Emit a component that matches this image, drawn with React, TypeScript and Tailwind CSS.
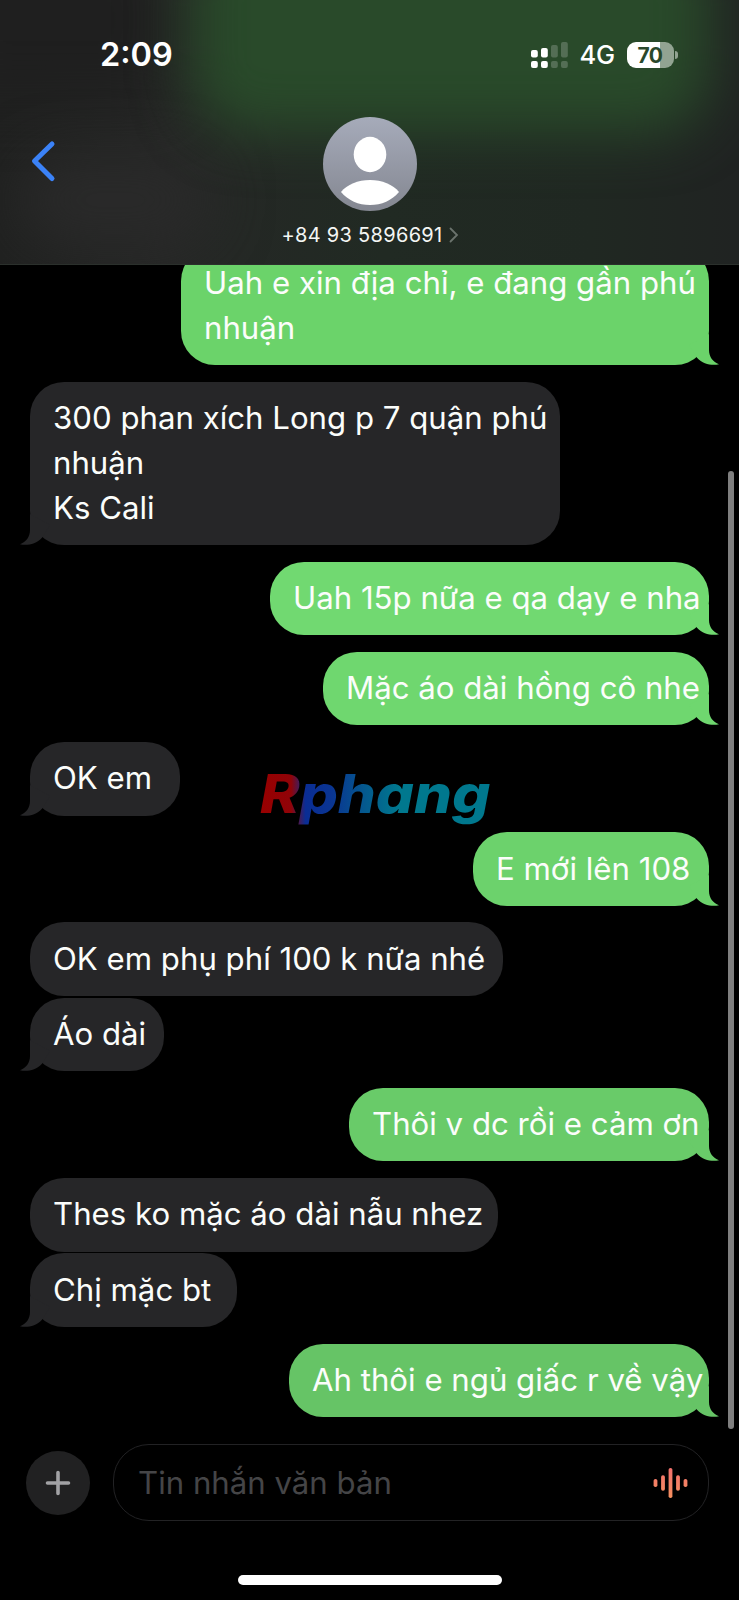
import clsx from 'clsx';

type Message = {
  id: number;
  lines: string[];
  mine?: boolean;
  tail?: boolean;
  box: string; // bubble width + tracking
  color: string;
};

const MESSAGES: Message[] = [
  { id: 1, mine: true, tail: true, lines: ['Uah e xin địa chỉ, e đang gần phú', 'nhuận'], box: 'w-[528px] tracking-[0px]', color: 'bg-[#6bd36a] text-[#6bd36a]' },
  { id: 2, tail: true, lines: ['300 phan xích Long p 7 quận phú', 'nhuận', 'Ks Cali'], box: 'w-[530px] tracking-[0px]', color: 'bg-[#262628] text-[#262628]' },
  { id: 3, mine: true, tail: true, lines: ['Uah 15p nữa e qa dạy e nha'], box: 'w-[439px] tracking-[0px]', color: 'bg-[#71d971] text-[#71d971]' },
  { id: 4, mine: true, tail: true, lines: ['Mặc áo dài hồng cô nhe'], box: 'w-[386px] tracking-[0px]', color: 'bg-[#6fd76f] text-[#6fd76f]' },
  { id: 5, tail: true, lines: ['OK em'], box: 'w-[150px] tracking-[0px]', color: 'bg-[#262628] text-[#262628]' },
  { id: 6, mine: true, tail: true, lines: ['E mới lên 108'], box: 'w-[236px] tracking-[0px]', color: 'bg-[#6cd26c] text-[#6cd26c]' },
  { id: 7, lines: ['OK em phụ phí 100 k nữa nhé'], box: 'w-[473px] tracking-[0px]', color: 'bg-[#262628] text-[#262628]' },
  { id: 8, tail: true, lines: ['Áo dài'], box: 'w-[134px] tracking-[0px]', color: 'bg-[#262628] text-[#262628]' },
  { id: 9, mine: true, tail: true, lines: ['Thôi v dc rồi e cảm ơn'], box: 'w-[360px] tracking-[0px]', color: 'bg-[#69cb69] text-[#69cb69]' },
  { id: 10, lines: ['Thes ko mặc áo dài nẫu nhez'], box: 'w-[468px] tracking-[0px]', color: 'bg-[#262628] text-[#262628]' },
  { id: 11, tail: true, lines: ['Chị mặc bt'], box: 'w-[207px] tracking-[0px]', color: 'bg-[#262628] text-[#262628]' },
  { id: 12, mine: true, tail: true, lines: ['Ah thôi e ngủ giấc r về vậy'], box: 'w-[420px] tracking-[0px]', color: 'bg-[#66c466] text-[#66c466]' },
];

const SIGNAL = [
  { x: 0, top: 8, h: 7.5, on: true },
  { x: 10, top: 6, h: 9.5, on: true },
  { x: 20, top: 3, h: 12.5, on: false },
  { x: 30, top: 0, h: 15.5, on: false },
];

const WAVE = [8, 15.5, 30, 15.5, 8];

function Tail({ mine }: { mine?: boolean }) {
  return (
    <svg
      width="32"
      height="32"
      viewBox="-12 -31 32 32"
      className={clsx('absolute -bottom-px', mine ? '-right-3 -scale-x-100' : '-left-3')}
      fill="currentColor"
    >
      <path d="M0 -31V-15C0 -8 -4 -3 -10 -0.8C-3 1 6 -1 12 -7.3L20 -20Z" />
    </svg>
  );
}

function Bubble({ message }: { message: Message }) {
  const { lines, mine, tail, box, color } = message;
  return (
    <div
      className={clsx(
        'relative shrink-0 rounded-[34px] py-[14.3px] pl-[23px] text-[31.2px] leading-[44.8px]',
        mine ? 'self-end' : 'self-start',
        tail ? 'mb-[16.8px] last:mb-0' : 'mb-[1.9px]',
        box,
        color,
      )}
    >
      {tail && <Tail mine={mine} />}
      {lines.map((line) => (
        <p key={line} className="relative whitespace-nowrap text-[#fbfdfb]">{line}</p>
      ))}
    </div>
  );
}

function StatusBar() {
  return (
    <div className="relative flex h-[110px] items-center justify-between pl-[100px] pr-[61px]">
      <span className="text-[32.5px] font-semibold leading-none text-white">2:09</span>
      <div className="flex items-center">
        <svg width="38" height="26" viewBox="0 0 38 26" fill="white" className="mr-[11px]">
          {SIGNAL.map((bar) => (
            <g key={bar.x} opacity={bar.on ? 1 : 0.2}>
              <rect x={bar.x} y={bar.top} width="6.8" height={bar.h} rx="2" />
              <rect x={bar.x} y="19" width="6.8" height="7" rx="2" />
            </g>
          ))}
        </svg>
        <span className="mr-[11px] w-[36px] text-[25.5px] font-medium leading-none tracking-[-0.3px] text-white">4G</span>
        <div className="relative flex h-[26px] w-[47px] items-center justify-center overflow-hidden rounded-[9px] bg-[linear-gradient(90deg,#fff_71%,#92a392_71%)]">
          <span className="text-[21px] font-bold leading-none tracking-[-0.5px] text-[#29482b]">70</span>
        </div>
        <div className="ml-[1.5px] h-[8px] w-[3px] rounded-r-full bg-[#92a392]" />
      </div>
    </div>
  );
}

function Header() {
  return (
    <header className="relative h-[265px] shrink-0 overflow-hidden border-b border-[#2b302c] bg-[linear-gradient(90deg,#202120_0%,#262726_22%,#212a23_52%,#202822_80%,#202322_100%)]">
      <div className="absolute -left-[60px] -top-[60px] h-[160px] w-[230px] bg-[#1f1f1f] blur-[30px]" />
      <div className="absolute left-[20px] top-[160px] h-[80px] w-[190px] rounded-full bg-[#2a2a2a] blur-[30px]" />
      <div className="absolute -top-[80px] left-[190px] h-[212px] w-[520px] rounded-[60px] bg-[#294a2a] blur-[28px]" />
      <StatusBar />
      <svg width="28" height="44" viewBox="0 0 28 44" fill="none" stroke="#3b82f7" strokeWidth="5" strokeLinecap="round" strokeLinejoin="round" className="absolute left-[29px] top-[139px]">
        <path d="M23 5L5.5 22L23 39.500" />
      </svg>
      <div className="relative mt-[7px] flex flex-col items-center">
        <svg width="94" height="94" viewBox="0 0 94 94">
          <defs>
            <linearGradient id="avatar" x1="0" y1="0" x2="0" y2="1">
              <stop offset="0" stopColor="#a6abba" />
              <stop offset="1" stopColor="#848791" />
            </linearGradient>
          </defs>
          <circle cx="47" cy="47" r="47" fill="url(#avatar)" />
          <ellipse cx="47" cy="37.500" rx="16.300" ry="17.700" fill="white" />
          <path d="M18 75C24 67.500 35 63 47 63C59 63 70 67.500 76 75C69 83.500 58.500 88 47 88C35.500 88 25 83.500 18 75Z" fill="white" />
        </svg>
        <div className="mt-[9px] flex items-center pl-px">
          <span className="text-[20px] leading-[30px] tracking-[0.3px] text-[#f4f6f4]">+84 93 5896691</span>
          <svg width="10" height="16" viewBox="0 0 10 16" fill="none" stroke="#6b736d" strokeWidth="1.8" strokeLinecap="round" className="ml-[6px]">
            <path d="M1.500 1.500L8 8L1.500 14.500" />
          </svg>
        </div>
      </div>
    </header>
  );
}

function Composer() {
  return (
    <div className="mt-[27px] flex h-[77px] shrink-0 items-center pl-[26px] pr-[30px]">
      <button className="mr-[23px] flex size-16 items-center justify-center rounded-full bg-[#212122]">
        <svg width="26" height="26" viewBox="0 0 26 26" stroke="#a2a2a5" strokeWidth="3.6" strokeLinecap="round">
          <path d="M13 2.500V23.500M2.500 13H23.500" />
        </svg>
      </button>
      <div className="flex h-full flex-1 items-center justify-between rounded-[36px] border-[1.5px] border-[#222224] pl-[24px] pr-[20px]">
        <span className="text-[31.2px] leading-[44px] tracking-[0px] text-[#454547]">Tin nhắn văn bản</span>
        <svg width="35" height="30" viewBox="0 0 35 30">
          <defs>
            <linearGradient id="wave" gradientUnits="userSpaceOnUse" x1="0" y1="0" x2="0" y2="30">
              <stop offset="0" stopColor="#f2706c" />
              <stop offset="1" stopColor="#f6905f" />
            </linearGradient>
          </defs>
          {WAVE.map((h, i) => (
            <rect key={i} x={0.6 + i * 7.5} y={15 - h / 2} width="3.8" height={h} rx="1.8" fill="url(#wave)" />
          ))}
        </svg>
      </div>
    </div>
  );
}

export default function App() {
  return (
    <div className="relative flex h-[1600px] w-[739px] flex-col overflow-hidden bg-black font-['Inter',sans-serif]">
      <Header />
      <main className="flex h-[1152px] shrink-0 flex-col justify-end overflow-hidden pl-[30px] pr-[30px]">
        {MESSAGES.map((message) => (
          <Bubble key={message.id} message={message} />
        ))}
      </main>
      <Composer />

      {/* Home indicator */}
      <div className="mx-auto mt-[54px] h-[10px] w-[264px] rounded-full bg-white" />

      {/* Scrollbar */}
      <div className="absolute left-[728px] top-[471px] h-[958px] w-[5.500px] rounded-full bg-[#7f7f7f]" />

      {/* Watermark */}
      <div className="absolute left-[260px] top-[762px] origin-left scale-x-[1.13] bg-[linear-gradient(90deg,#980000_0%,#900308_13%,#0a2d94_19%,#0a3592_30%,#045a8e_44%,#00788e_58%,#00788e_100%)] bg-clip-text pr-2 text-[53px] font-extrabold italic leading-[64px] text-transparent">
        Rphang
      </div>
    </div>
  );
}
